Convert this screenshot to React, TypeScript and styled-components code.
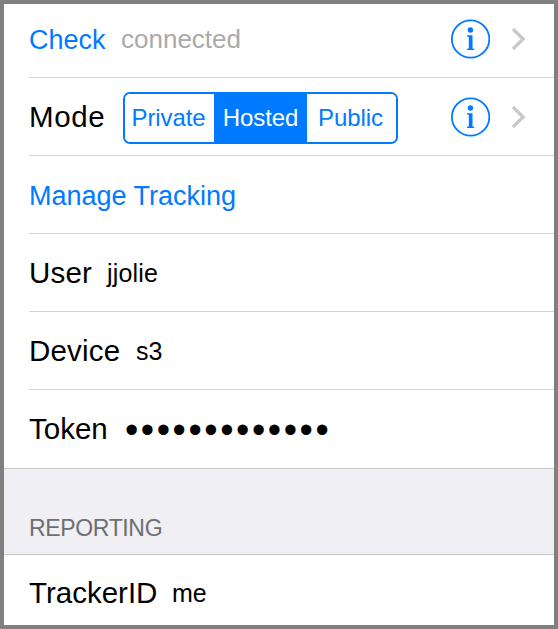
import React from "react";
import styled, { createGlobalStyle } from "styled-components";

const BLUE = "#007aff";

const GlobalStyle = createGlobalStyle`
  html, body { margin: 0; padding: 0; background: #808080; }
  *, *::before, *::after { box-sizing: border-box; }
`;

const Frame = styled.main`
  width: 558px;
  height: 629px;
  border: 4px solid #808080;
  background: #fff;
  overflow: hidden;
  font-family: "Liberation Sans", Arial, Helvetica, sans-serif;
  color: #000;
`;

const List = styled.div<{ $tucked?: boolean }>`
  margin-top: ${(p) => (p.$tucked ? "-4px" : "0")};
`;

const Row = styled.div<{ $last?: boolean; $short?: boolean }>`
  display: flex;
  align-items: center;
  height: ${(p) => (p.$last ? 79 : p.$short ? 76 : 78)}px;
  margin-left: ${(p) => (p.$last ? 0 : 25)}px;
  padding-left: ${(p) => (p.$last ? 25 : 0)}px;
  padding-right: 28px;
  border-bottom: 1px solid ${(p) => (p.$last ? "#c8c7cc" : "#d3d3d5")};
  white-space: nowrap;
`;

const Label = styled.span<{ $width: number; $spacing?: number }>`
  flex: none;
  width: ${(p) => p.$width}px;
  font-size: 29.5px;
  line-height: 36px;
  letter-spacing: ${(p) => p.$spacing ?? 0}px;
`;

const Action = styled(Label)`
  padding-top: 2px;
  font-size: 27px;
  color: ${BLUE};
`;

const Value = styled.span<{ $muted?: boolean; $spacing?: number }>`
  padding-top: ${(p) => (p.$muted ? 1 : 0)}px;
  font-size: ${(p) => (p.$muted ? 26 : 25)}px;
  line-height: 36px;
  letter-spacing: ${(p) => p.$spacing ?? 0}px;
  color: ${(p) => (p.$muted ? "#aaa" : "#000")};
`;

const Secret = styled.span`
  padding: 2px 0 0 1px;
  font-size: 38px;
  line-height: 36px;
  letter-spacing: 2.57px;
`;

const Segments = styled.div`
  display: grid;
  grid-template-columns: 89px 93px 89px;
  width: 275px;
  height: 52px;
  margin-top: 2px;
  border: 2px solid ${BLUE};
  border-radius: 7px;
  overflow: hidden;
`;

const Segment = styled.button<{ $active?: boolean }>`
  padding: 0 2px 0 0;
  border: 0;
  font: 24px/48px "Liberation Sans", Arial, sans-serif;
  text-align: center;
  letter-spacing: -0.1px;
  color: ${(p) => (p.$active ? "#fff" : BLUE)};
  background: ${(p) => (p.$active ? BLUE : "#fff")};

  &:nth-child(2) {
    padding-right: 0;
  }
`;

const Accessories = styled.div`
  display: flex;
  align-items: center;
  gap: 21px;
  margin-left: auto;
`;

const SectionHeader = styled.h2`
  margin: 0;
  height: 86px;
  padding: 44px 25px 0;
  border-bottom: 1px solid #c8c7cc;
  background: #efeff4;
  color: #6d6d72;
  font-size: 23px;
  font-weight: 400;
  line-height: 30px;
  letter-spacing: -0.35px;
`;

const InfoIcon = () => (
  <svg width="40" height="40" viewBox="0 0 40 40" fill="none">
    <circle cx="20.6" cy="20" r="18.7" stroke={BLUE} strokeWidth="1.8" />
    <circle cx="20.4" cy="11" r="2.7" fill={BLUE} />
    <path d="M17 16.2H22.5V29.4L24.2 29.7V31H17V29.7L18.8 29.4V17.8L17 17.4Z" fill={BLUE} />
  </svg>
);

const Chevron = () => (
  <svg width="15" height="26" viewBox="0 0 15 26" fill="none">
    <path d="M1.9 3L12.2 13L1.9 23" stroke="#c7c7cc" strokeWidth="3.2" />
  </svg>
);

const Disclosure = () => (
  <Accessories>
    <InfoIcon />
    <Chevron />
  </Accessories>
);

export default function App() {
  return (
    <>
      <GlobalStyle />
      <Frame>
        <List $tucked>
          <Row>
            <Action $width={92}>Check</Action>
            <Value $muted>connected</Value>
            <Disclosure />
          </Row>
          <Row>
            <Label $width={94} $spacing={0.6}>Mode</Label>
            <Segments>
              <Segment>Private</Segment>
              <Segment $active>Hosted</Segment>
              <Segment>Public</Segment>
            </Segments>
            <Disclosure />
          </Row>
          <Row>
            <Action $width={220}>Manage Tracking</Action>
          </Row>
          <Row>
            <Label $width={78} $spacing={0.2}>User</Label>
            <Value $spacing={0.2}>jjolie</Value>
          </Row>
          <Row>
            <Label $width={107} $spacing={0.2}>Device</Label>
            <Value>s3</Value>
          </Row>
          <Row $last>
            <Label $width={95}>Token</Label>
            <Secret>•••••••••••••</Secret>
          </Row>
        </List>
        <SectionHeader>REPORTING</SectionHeader>
        <List>
          <Row $short>
            <Label $width={143}>TrackerID</Label>
            <Value>me</Value>
          </Row>
        </List>
      </Frame>
    </>
  );
}
